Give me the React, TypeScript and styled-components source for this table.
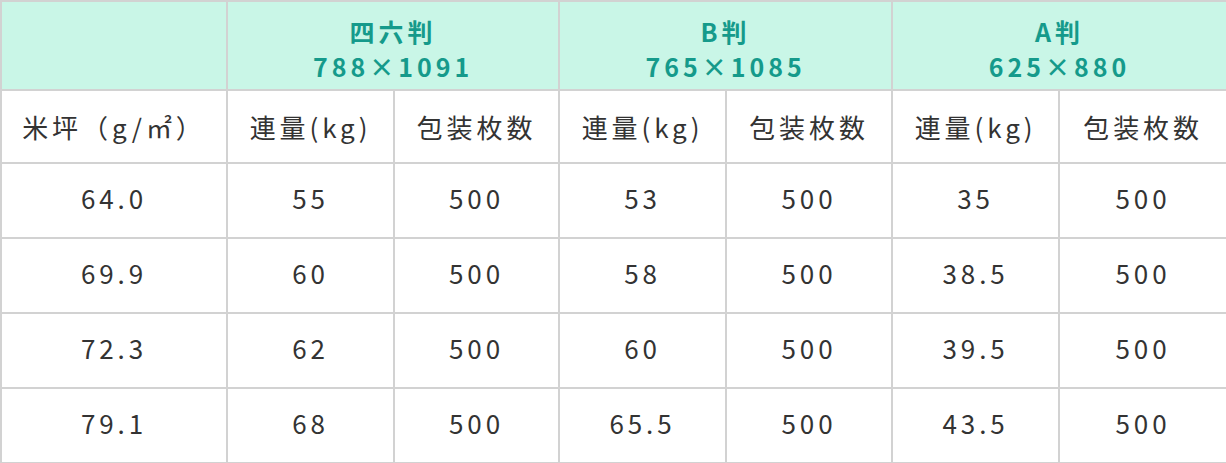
import React from 'react';
import styled, { createGlobalStyle } from 'styled-components';

const GlobalStyle = createGlobalStyle`
    html, body {
        margin: 0;
        padding: 0;
        background: #fff;
    }
`

const Table = styled.table`
    width: 1226px;
    border-collapse: collapse;
    table-layout: fixed;
    font-family: "Noto Sans CJK JP", "Noto Sans", sans-serif;
    color: #333;
`

const HeadCell = styled.th`
    height: 81px;
    padding: 6px 0 0;
    background: #c9f6e7;
    border: 2px solid #d2d2d2;
    color: #159a8b;
    font-size: 25px;
    font-weight: 700;
    line-height: 35px;
    letter-spacing: 0.16em;
    text-align: center;
    vertical-align: middle;
`

const Cell = styled.td<{ $num?: boolean }>`
    height: ${props => props.$num ? 68 : 71}px;
    padding: 0 0 ${props => props.$num ? 5 : 0}px;
    border: 2px solid #d2d2d2;
    font-size: 26px;
    font-weight: 400;
    line-height: 30px;
    letter-spacing: 0.15em;
    text-align: center;
    vertical-align: middle;
`

const widths = [226, 167, 165, 167, 166, 167, 168];

const sizes = [
    { name: '四六判', dim: '788×1091' },
    { name: 'B判', dim: '765×1085' },
    { name: 'A判', dim: '625×880' },
];

const rows = [
    ['64.0', '55', '500', '53', '500', '35', '500'],
    ['69.9', '60', '500', '58', '500', '38.5', '500'],
    ['72.3', '62', '500', '60', '500', '39.5', '500'],
    ['79.1', '68', '500', '65.5', '500', '43.5', '500'],
];

function App() {
    return (
        <>
            <GlobalStyle />
            <Table>
                <colgroup>
                    {widths.map((w, i) => <col key={i} style={{ width: w }} />)}
                </colgroup>
                <thead>
                    <tr>
                        <HeadCell></HeadCell>
                        {sizes.map(s => (
                            <HeadCell key={s.name} colSpan={2}>
                                {s.name}<br />{s.dim}
                            </HeadCell>
                        ))}
                    </tr>
                </thead>
                <tbody>
                    <tr>
                        <Cell>米坪（g/㎡）</Cell>
                        {sizes.map(s => (
                            <React.Fragment key={s.name}>
                                <Cell>連量(kg)</Cell>
                                <Cell>包装枚数</Cell>
                            </React.Fragment>
                        ))}
                    </tr>
                    {rows.map((r, i) => (
                        <tr key={i}>
                            {r.map((v, j) => <Cell key={j} $num>{v}</Cell>)}
                        </tr>
                    ))}
                </tbody>
            </Table>
        </>
    );
}

export default App;
